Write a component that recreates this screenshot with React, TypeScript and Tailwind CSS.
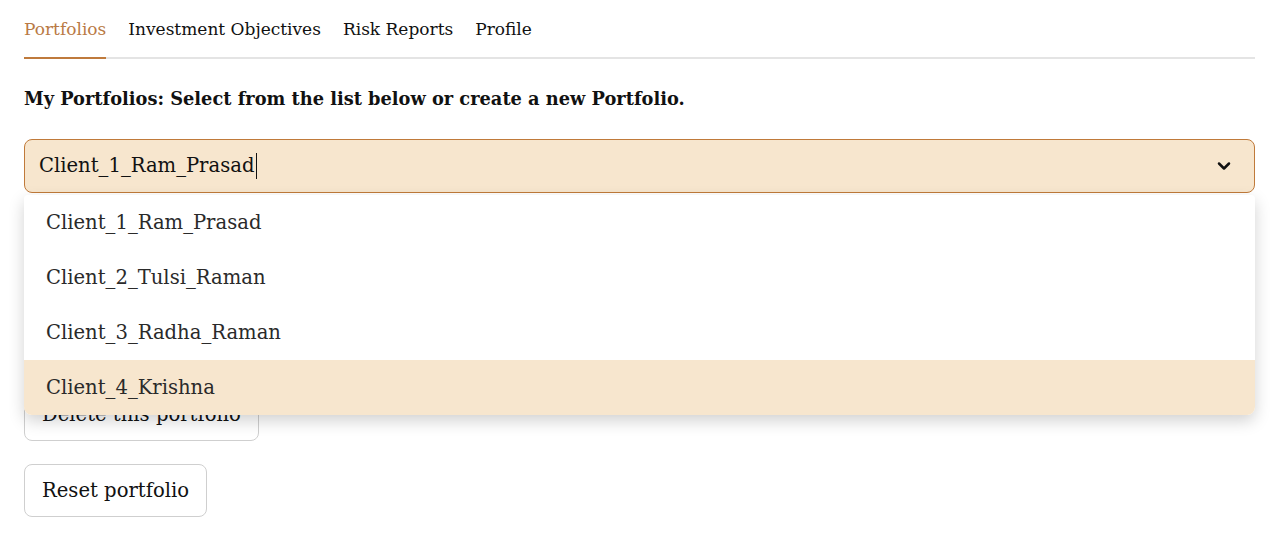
import { ChevronDown } from "lucide-react";

const tabs = ["Portfolios", "Investment Objectives", "Risk Reports", "Profile"];
const clients = ["Client_1_Ram_Prasad", "Client_2_Tulsi_Raman", "Client_3_Radha_Raman", "Client_4_Krishna"];

export default function App() {
  return (
    <div className="min-h-screen bg-white pl-6 pr-[26px] text-[#111] [font-family:'DejaVu_Serif',serif]">
      {/* Tabs */}
      <div className="flex gap-[22px] border-b-2 border-[#e4e4e4] pt-[17px]">
        {tabs.map((t, i) => (
          <div
            key={t}
            className={
              "-mb-[2px] pb-[16px] text-[17px] leading-[24px] " +
              (i === 0 ? "border-b-2 border-[#bf7a3c] text-[#b97a45]" : "border-b-2 border-transparent text-[#111]")
            }
          >
            {t}
          </div>
        ))}
      </div>

      <h2 className="mt-[27px] text-[17.8px] font-bold leading-[26px]">
        My Portfolios: Select from the list below or create a new Portfolio.
      </h2>

      {/* Select */}
      <div className="relative mt-[27px]">
        <div className="flex h-[54px] items-center justify-between rounded-lg border border-[#c07a3a] bg-[#f7e6ce] pl-[14px] pr-[20px]">
          <div className="flex items-center text-[19.6px]">
            <span>Client_1_Ram_Prasad</span>
            <span className="ml-[2px] h-[26px] w-px bg-[#111]" />
          </div>
          <ChevronDown className="h-5 w-5" strokeWidth={3} />
        </div>

        <div className="absolute left-0 right-0 top-[56px] z-10 overflow-hidden rounded-b-lg rounded-t-sm bg-white shadow-[0_6px_16px_rgba(0,0,0,0.18)]">
          {clients.map((c, i) => (
            <div
              key={c}
              className={
                "flex h-[55px] items-center pl-[22px] text-[19.6px] text-[#2a2a2a] " +
                (i === 3 ? "bg-[#f7e6ce]" : "")
              }
            >
              {c}
            </div>
          ))}
        </div>
      </div>

      <div className="flex flex-col items-start gap-[23px] pt-[195px]">
        <button className="h-[53px] rounded-lg border border-[#cfcfcf] bg-white px-[17px] text-[19.6px]">
          Delete this portfolio
        </button>
        <button className="h-[53px] rounded-lg border border-[#cfcfcf] bg-white px-[17px] text-[19.6px]">
          Reset portfolio
        </button>
      </div>
    </div>
  );
}
